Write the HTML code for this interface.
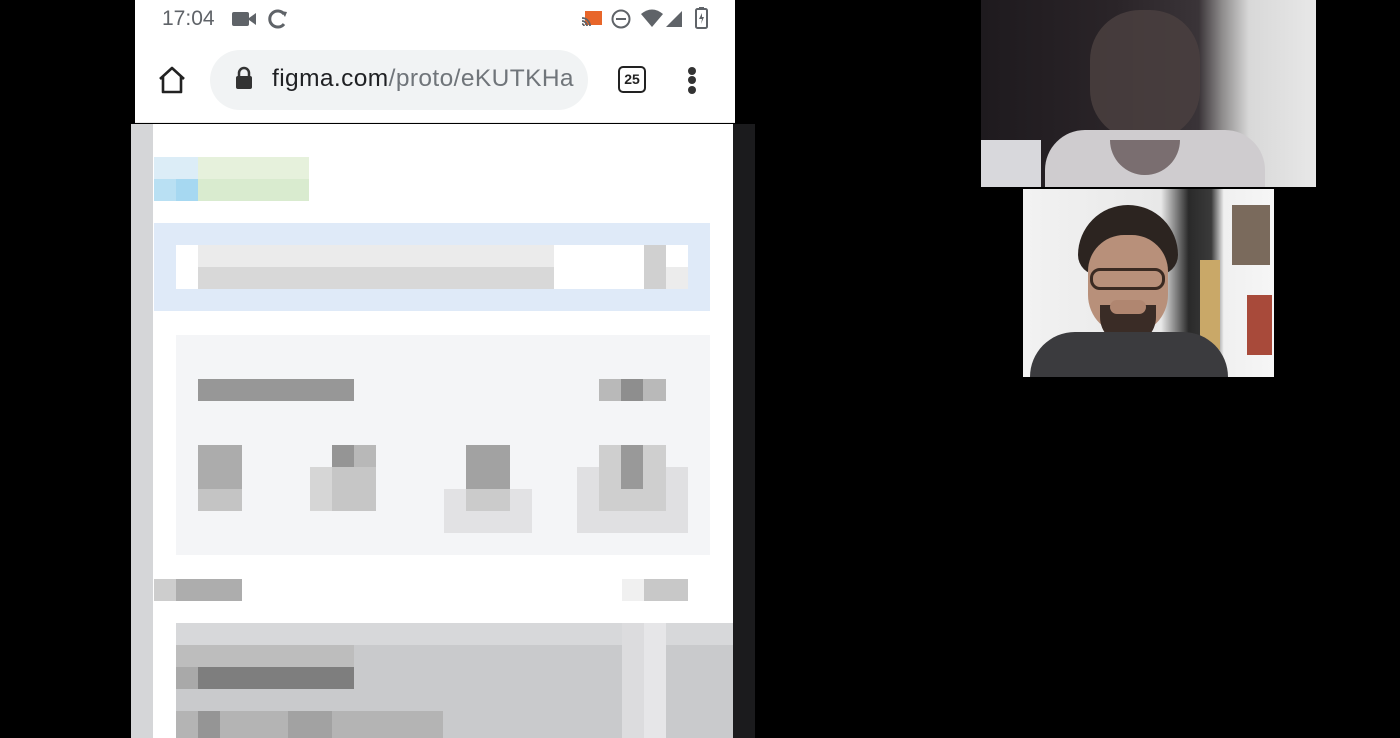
<!DOCTYPE html>
<html><head><meta charset="utf-8"><style>
*{margin:0;padding:0;box-sizing:border-box}
body{width:1400px;height:738px;background:#000;position:relative;overflow:hidden;font-family:"Liberation Sans",sans-serif}
.a{position:absolute}
</style></head><body>
<!-- phone top -->
<div class="a" style="left:135px;top:0;width:600px;height:123px;background:#fff;border-bottom:1px solid #ececec"></div>
<div class="a" style="left:162px;top:7px;font-size:21px;color:#5f6368">17:04</div>
<svg class="a" style="left:232px;top:10px" width="26" height="18"><rect x="0" y="2" width="17" height="14" rx="2" fill="#5f6368"/><path d="M17 8 L24 3 V15 L17 10Z" fill="#5f6368"/></svg>
<svg class="a" style="left:267px;top:8px" width="22" height="22"><path d="M17 6 A8 8 0 1 0 17 16" fill="none" stroke="#5f6368" stroke-width="3"/><path d="M14 3 L20 4 L18 9Z" fill="#5f6368"/></svg>
<svg class="a" style="left:580px;top:9px" width="24" height="20"><rect x="5" y="2" width="17" height="14" fill="#e8662a"/><path d="M2 9 A8 8 0 0 1 10 17 M2 12 A5 5 0 0 1 7 17 M2 15 A2 2 0 0 1 4 17" stroke="#5f6368" stroke-width="1.8" fill="none"/></svg>
<svg class="a" style="left:610px;top:8px" width="22" height="22"><circle cx="11" cy="11" r="8.5" fill="none" stroke="#5f6368" stroke-width="2"/><rect x="6" y="10" width="10" height="2" fill="#5f6368"/></svg>
<svg class="a" style="left:640px;top:8px" width="46" height="22"><path d="M1 6 Q12 -3 23 6 L12 19Z" fill="#5f6368"/><path d="M26 19 L42 3 V19Z" fill="#5f6368"/></svg>
<svg class="a" style="left:694px;top:6px" width="16" height="24"><rect x="2" y="3" width="11" height="19" rx="1.5" fill="none" stroke="#5f6368" stroke-width="2"/><rect x="5" y="1" width="5" height="3" fill="#5f6368"/><path d="M8 7 L5 13 H8 L7 18 L10 11 H8Z" fill="#5f6368"/></svg>
<svg class="a" style="left:156px;top:65px" width="32" height="30"><path d="M4 14 L16 3 L28 14 M7 12 V27 H25 V12" fill="none" stroke="#222" stroke-width="2.6" stroke-linejoin="round"/></svg>
<div class="a" style="left:210px;top:50px;width:378px;height:60px;background:#f1f3f4;border-radius:30px"></div>
<svg class="a" style="left:234px;top:66px" width="20" height="26"><path d="M5 11 V7 A5 5 0 0 1 15 7 V11" fill="none" stroke="#333" stroke-width="2.5"/><rect x="2" y="10" width="16" height="13" rx="2" fill="#333"/></svg>
<div class="a" style="left:272px;top:65px;font-size:24.5px;color:#202124;letter-spacing:0.4px">figma.com<span style="color:#70757a">/proto/eKUTKHa</span></div>
<div class="a" style="left:618px;top:66px;width:28px;height:27px;border:2.6px solid #222;border-radius:5px;font-size:14px;font-weight:bold;color:#222;text-align:center;line-height:22px">25</div>
<div class="a" style="left:688px;top:67px;width:8px;height:8px;border-radius:50%;background:#333"></div>
<div class="a" style="left:688px;top:76px;width:8px;height:8px;border-radius:50%;background:#333"></div>
<div class="a" style="left:688px;top:86px;width:8px;height:8px;border-radius:50%;background:#333"></div>

<!-- phone content -->
<div class="a" style="left:131px;top:124px;width:602px;height:614px;background:#fff"></div>
<div class="a" style="left:131px;top:124px;width:22px;height:614px;background:#d5d6d8"></div>
<div class="a" style="left:733px;top:124px;width:22px;height:614px;background:#1b1b1d"></div>

<div class="a" style="left:154px;top:157px;width:44px;height:22px;background:#dcedf7"></div>
<div class="a" style="left:198px;top:157px;width:111px;height:22px;background:#e6f1dc"></div>
<div class="a" style="left:154px;top:179px;width:22px;height:22px;background:#b9e0f3"></div>
<div class="a" style="left:176px;top:179px;width:22px;height:22px;background:#a6d8f1"></div>
<div class="a" style="left:198px;top:179px;width:111px;height:22px;background:#d9ebcf"></div>

<div class="a" style="left:154px;top:223px;width:556px;height:88px;background:#dfeaf8"></div>
<div class="a" style="left:176px;top:245px;width:512px;height:44px;background:#fff"></div>
<div class="a" style="left:198px;top:245px;width:356px;height:22px;background:#ebebeb"></div>
<div class="a" style="left:198px;top:267px;width:356px;height:22px;background:#d8d8d8"></div>
<div class="a" style="left:644px;top:245px;width:22px;height:44px;background:#d0d0d0"></div>
<div class="a" style="left:666px;top:267px;width:22px;height:22px;background:#ececec"></div>

<div class="a" style="left:176px;top:335px;width:534px;height:220px;background:#f4f5f7"></div>
<div class="a" style="left:198px;top:379px;width:156px;height:22px;background:#979797"></div>
<div class="a" style="left:599px;top:379px;width:67px;height:22px;background:#b9b9b9"></div>
<div class="a" style="left:621px;top:379px;width:22px;height:22px;background:#8e8e8e"></div>

<div class="a" style="left:198px;top:445px;width:44px;height:44px;background:#acacac"></div>
<div class="a" style="left:198px;top:489px;width:44px;height:22px;background:#c4c4c4"></div>
<div class="a" style="left:332px;top:445px;width:44px;height:22px;background:#b8b8b8"></div>
<div class="a" style="left:332px;top:445px;width:22px;height:22px;background:#959595"></div>
<div class="a" style="left:310px;top:467px;width:66px;height:44px;background:#d6d6d6"></div>
<div class="a" style="left:332px;top:467px;width:44px;height:44px;background:#c6c6c6"></div>
<div class="a" style="left:466px;top:445px;width:44px;height:44px;background:#a2a2a2"></div>
<div class="a" style="left:444px;top:489px;width:88px;height:44px;background:#e2e2e4"></div>
<div class="a" style="left:466px;top:489px;width:44px;height:22px;background:#cbcbcb"></div>
<div class="a" style="left:577px;top:467px;width:111px;height:66px;background:#e0e0e2"></div>
<div class="a" style="left:599px;top:445px;width:67px;height:66px;background:#cfcfcf"></div>
<div class="a" style="left:621px;top:445px;width:22px;height:44px;background:#999"></div>

<div class="a" style="left:154px;top:579px;width:88px;height:22px;background:#adadad"></div>
<div class="a" style="left:154px;top:579px;width:22px;height:22px;background:#cdcdcd"></div>
<div class="a" style="left:622px;top:579px;width:22px;height:22px;background:#f0f0f0"></div>
<div class="a" style="left:644px;top:579px;width:44px;height:22px;background:#c8c8c8"></div>

<div class="a" style="left:176px;top:623px;width:557px;height:115px;background:#c9cacc"></div>
<div class="a" style="left:176px;top:623px;width:557px;height:22px;background:#d7d8da"></div>
<div class="a" style="left:622px;top:623px;width:22px;height:115px;background:#dcdcde"></div>
<div class="a" style="left:644px;top:623px;width:22px;height:115px;background:#e6e6e8"></div>
<div class="a" style="left:176px;top:645px;width:178px;height:22px;background:#bdbdbd"></div>
<div class="a" style="left:176px;top:667px;width:178px;height:22px;background:#a9a9a9"></div>
<div class="a" style="left:198px;top:667px;width:156px;height:22px;background:#7e7e7e"></div>
<div class="a" style="left:176px;top:711px;width:267px;height:27px;background:#b4b4b4"></div>
<div class="a" style="left:198px;top:711px;width:22px;height:27px;background:#959595"></div>
<div class="a" style="left:288px;top:711px;width:44px;height:27px;background:#a2a2a2"></div>

<!-- video 1 -->
<div class="a" style="left:981px;top:0;width:335px;height:187px;background:linear-gradient(90deg,#1e1a1e 0%,#2a2428 40%,#3a3438 65%,#8e8c8c 72%,#d8d8d8 80%,#e8e8e8 100%)"></div>
<div class="a" style="left:1090px;top:10px;width:110px;height:130px;border-radius:50px;background:#4a4040;opacity:.85"></div>
<div class="a" style="left:981px;top:140px;width:60px;height:47px;background:#d8d8dc"></div>
<div class="a" style="left:1045px;top:130px;width:220px;height:57px;border-radius:40px 40px 0 0;background:#cfcccf"></div>
<div class="a" style="left:1110px;top:140px;width:70px;height:35px;border-radius:0 0 35px 35px;background:#7a6e70"></div>
<!-- video 2 -->
<div class="a" style="left:1023px;top:189px;width:251px;height:188px;background:linear-gradient(90deg,#f2f2f2 0%,#e8e8e8 55%,#2a2a2a 66%,#3a3a3a 75%,#f0f0f0 80%,#f6f6f6 100%)"></div>
<div class="a" style="left:1200px;top:260px;width:20px;height:90px;background:#c9a868"></div>
<div class="a" style="left:1232px;top:205px;width:38px;height:60px;background:#7a6a5c"></div>
<div class="a" style="left:1247px;top:295px;width:25px;height:60px;background:#a84a3a"></div>
<div class="a" style="left:1078px;top:205px;width:100px;height:70px;border-radius:50px 50px 20px 20px;background:#2c2420"></div>
<div class="a" style="left:1088px;top:235px;width:80px;height:100px;border-radius:38px 38px 42px 42px;background:#b8907a"></div>
<div class="a" style="left:1090px;top:268px;width:75px;height:22px;border-radius:10px;border:3px solid #3a2a22"></div>
<div class="a" style="left:1100px;top:305px;width:56px;height:40px;border-radius:0 0 28px 28px;background:#3a2c26"></div>
<div class="a" style="left:1110px;top:300px;width:36px;height:14px;border-radius:8px;background:#b08670"></div>
<div class="a" style="left:1030px;top:332px;width:198px;height:45px;border-radius:60px 60px 0 0;background:#3b3b3e"></div>
</body></html>
